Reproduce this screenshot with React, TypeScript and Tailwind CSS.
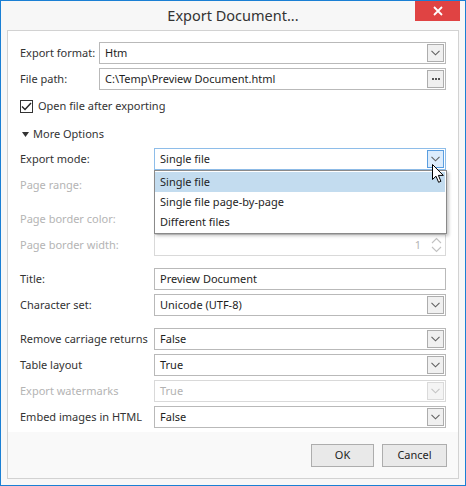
import React from 'react';

const Chevron = ({ color = '#5f5f5f' }: { color?: string }) => (
  <svg width="9" height="6" viewBox="0 0 9 6">
    <path d="M0.5 0.8 L4.5 4.8 L8.5 0.8" fill="none" stroke={color} strokeWidth="1.1" />
  </svg>
);

function ComboButton({ disabled, active }: { disabled?: boolean; active?: boolean }) {
  const cls = active
    ? 'border-[#5a9ee0] bg-[#dcecfc]'
    : disabled
      ? 'border-[#dadada] bg-[#f4f4f4]'
      : 'border-[#adadad] bg-[#f0f0f0]';
  return (
    <div className={`w-[17px] h-[18px] mr-px border flex items-center justify-center ${cls}`}>
      <Chevron color={disabled ? '#c4c4c4' : '#606060'} />
    </div>
  );
}

function Combo({ value, disabled, active }: { value: string; disabled?: boolean; active?: boolean }) {
  const border = active ? 'border-[#8ebde9]' : disabled ? 'border-[#d9d9d9]' : 'border-[#b9b9b9]';
  return (
    <div className={`flex-1 h-[22px] border bg-white flex items-center ${border}`}>
      <span className={`flex-1 pl-[5px] ${disabled ? 'text-[#b2b2b2]' : 'text-[#1e1e1e]'}`}>{value}</span>
      <ComboButton disabled={disabled} active={active} />
    </div>
  );
}

function TextBox({ value }: { value: string }) {
  return (
    <div className="flex-1 h-[22px] border border-[#b9b9b9] bg-white flex items-center pl-[5px] text-[#1e1e1e]">
      {value}
    </div>
  );
}

function Row({
  label,
  disabled,
  className = '',
  labelWidth = 'w-[134px]',
  children,
}: {
  label: string;
  disabled?: boolean;
  className?: string;
  labelWidth?: string;
  children?: React.ReactNode;
}) {
  return (
    <div className={`flex items-center h-[22px] ${className}`}>
      <div className={`${labelWidth} shrink-0 ${disabled ? 'text-[#b4b4b4]' : 'text-[#333]'}`}>{label}</div>
      {children}
    </div>
  );
}

export default function App() {
  return (
    <div className="w-[466px] h-[486px] border border-[#1a7fd4] bg-[#f7f7f7] flex flex-col font-['Noto_Sans',sans-serif] text-[11px] text-[#333] overflow-hidden">
      {/* title bar */}
      <div className="h-[29px] grid grid-cols-[1fr_auto_1fr] shrink-0">
        <div />
        <div className="text-[14.5px] text-[#333] pt-[4px]">Export Document...</div>
        <div className="flex justify-end pr-[5px]">
          <div className="w-[45px] h-[20px] bg-[#e04343] flex items-center justify-center">
            <svg width="10" height="10" viewBox="0 0 10 10">
              <path d="M1 1 L9 9 M9 1 L1 9" stroke="#fff" strokeWidth="1.8" />
            </svg>
          </div>
        </div>
      </div>

      {/* panel */}
      <div className="flex-1 mx-[6px] mb-[6px] border border-[#d2d2d2] flex flex-col">
        <div className="bg-white px-[12px] pt-[11px] pb-[4px] flex flex-col">
          <Row label="Export format:" labelWidth="w-[79px]">
            <Combo value="Htm" />
          </Row>
          <Row label="File path:" labelWidth="w-[79px]" className="mt-[4px]">
            <div className="flex-1 h-[22px] border border-[#b9b9b9] bg-white flex items-center">
              <span className="flex-1 pl-[5px] text-[#1e1e1e]">C:\Temp\Preview Document.html</span>
              <div className="w-[17px] h-[18px] mr-px border border-[#adadad] bg-[#f0f0f0] flex items-center justify-center gap-[1px] pb-[1px]">
                <span className="w-[2px] h-[2px] bg-[#555]" />
                <span className="w-[2px] h-[2px] bg-[#555]" />
                <span className="w-[2px] h-[2px] bg-[#555]" />
              </div>
            </div>
          </Row>

          <div className="mt-[10px] h-[13px] flex items-center">
            <div className="w-[13px] h-[13px] border border-[#333] bg-white flex items-center justify-center">
              <svg width="11" height="9" viewBox="0 0 11 9">
                <path d="M1 4.5 L4 7.5 L10 1" fill="none" stroke="#222" strokeWidth="1.4" />
              </svg>
            </div>
            <span className="ml-[5px] text-[#333]">Open file after exporting</span>
          </div>

          <div className="mt-[13px] h-[16px] flex items-center">
            <svg width="7" height="5" viewBox="0 0 7 5" className="ml-[2px]">
              <path d="M0 0 L7 0 L3.5 5 Z" fill="#333" />
            </svg>
            <span className="ml-[4px] text-[#333]">More Options</span>
          </div>

          <Row label="Export mode:" className="mt-[6px] relative">
            <Combo value="Single file" active />
            {/* dropdown popup */}
            <div className="absolute left-[134px] right-[-1px] top-[22px] h-[64px] border border-[#8a8a8a] bg-white pt-px shadow-[2px_2px_3px_rgba(0,0,0,0.22)] z-10 text-[#1e1e1e]">
              <div className="h-[20px] bg-[#c3dcef] flex items-center pl-[5px] mr-px">Single file</div>
              <div className="h-[20px] flex items-center pl-[5px]">Single file page-by-page</div>
              <div className="h-[20px] flex items-center pl-[5px]">Different files</div>
            </div>
            {/* mouse cursor */}
            <svg width="13" height="20" viewBox="0 0 13 20" className="absolute left-[412px] top-[16px] z-20">
              <path
                d="M0.5 0.5 L0.5 15.5 L4 12.2 L6.6 18.3 L8.9 17.3 L6.4 11.4 L11.3 11.4 Z"
                fill="#fff"
                stroke="#000"
                strokeWidth="1"
                strokeLinejoin="round"
              />
            </svg>
          </Row>
          <Row label="Page range:" disabled className="mt-[4px]">
            <div className="flex-1 h-[22px] border border-[#d9d9d9] bg-white" />
          </Row>
          <Row label="Page border color:" disabled className="mt-[12px]">
            <div className="flex-1 h-[22px] border border-[#d9d9d9] bg-white" />
          </Row>
          <Row label="Page border width:" disabled className="mt-[4px]">
            <div className="flex-1 h-[22px] border border-[#d9d9d9] bg-white flex items-center justify-end">
              <span className="text-[#b4b4b4] mr-[10px]">1</span>
              <svg width="11" height="16" viewBox="0 0 11 16" className="mr-[3px]">
                <path d="M1 6 L5.5 1.5 L10 6 M1 10 L5.5 14.5 L10 10" fill="none" stroke="#c2c2c2" strokeWidth="1.1" />
              </svg>
            </div>
          </Row>

          <Row label="Title:" className="mt-[12px]">
            <TextBox value="Preview Document" />
          </Row>
          <Row label="Character set:" className="mt-[4px]">
            <Combo value="Unicode (UTF-8)" />
          </Row>

          <Row label="Remove carriage returns" className="mt-[12px]">
            <Combo value="False" />
          </Row>
          <Row label="Table layout" className="mt-[4px]">
            <Combo value="True" />
          </Row>
          <Row label="Export watermarks" disabled className="mt-[4px]">
            <Combo value="True" disabled />
          </Row>
          <Row label="Embed images in HTML" className="mt-[4px]">
            <Combo value="False" />
          </Row>
        </div>

        {/* footer */}
        <div className="flex-1 bg-[#f9f9f9] flex justify-end items-start gap-[8px] pt-[12px] pr-[11px]">
          <button className="w-[63px] h-[23px] border border-[#adadad] bg-[#e9e9e9] text-[#1e1e1e] text-[11px]">OK</button>
          <button className="w-[65px] h-[23px] border border-[#adadad] bg-[#e9e9e9] text-[#1e1e1e] text-[11px]">Cancel</button>
        </div>
      </div>
    </div>
  );
}
